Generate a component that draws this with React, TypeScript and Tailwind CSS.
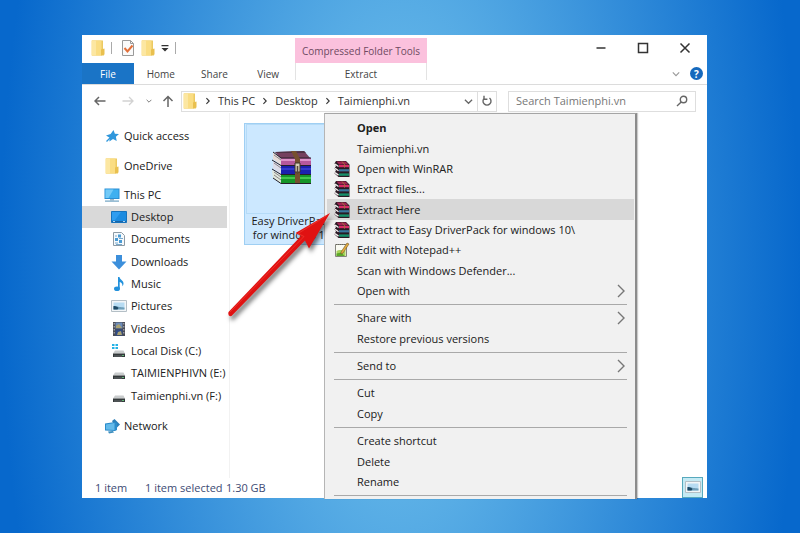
import type { ReactNode } from "react";

type IconProps = { className?: string };

const Folder = ({ className = "h-4 w-4" }: IconProps) => (
  <svg viewBox="0 0 16 16" className={className} aria-hidden="true">
    <path d="M2 .5h11v12l1 1v2H2z" fill="#ecca62" />
    <path d="M1.500 .5h10v15h-10z" fill="#fadd83" />
    <path d="M2 .5h4v15H2z" fill="#fce7a2" />
    <path d="M11 9.500l3.500-1v6l-3.500 1z" fill="#e9c04f" />
  </svg>
);

const CheckedPage = () => (
  <svg viewBox="0 0 16 16" className="h-4 w-4" aria-hidden="true">
    <path d="M2.500 .5h8l3 3v12h-11z" fill="#fafafa" stroke="#9a9a9a" />
    <path d="M10.500 .5v3h3" fill="none" stroke="#9a9a9a" />
    <path d="M4.500 8l3 3.500 5-6" fill="none" stroke="#e2703a" strokeWidth="2" />
  </svg>
);

const Pin = () => (
  <svg viewBox="0 0 16 16" className="h-4 w-4" aria-hidden="true">
    <path d="M9.500 2l1.400 3.700 4.100.4-3.100 2.600.8 4.300-3.700-1.900-3.600 2.500.3-3.800L2 7.500l4.600-1.600z" fill="#2f97dc" />
    <path d="M2.500 13.500l4-4" stroke="#2f97dc" strokeWidth="1.300" />
  </svg>
);

const Computer = () => (
  <svg viewBox="0 0 16 16" className="h-4 w-4" aria-hidden="true">
    <path d="M.5 1.500h15v10.500H.5z" fill="#2a8fd4" />
    <path d="M1.500 2.500h13v8.500h-13z" fill="#3fb0f0" />
    <path d="M1.500 2.500h8l-5 8.500h-3z" fill="#73caf7" />
    <path d="M6 12h4v1.500H6z" fill="#9fb8c8" />
    <path d="M1 13.500h14v1.200H1z" fill="#6fa3c2" />
  </svg>
);

const DesktopIcon = () => (
  <svg viewBox="0 0 16 16" className="h-4 w-4" aria-hidden="true">
    <path d="M.5 2.500h15v11H.5z" fill="#1b8be0" stroke="#1673bd" />
    <path d="M1 3h9l-6 8H1z" fill="#2f9df0" />
    <path d="M1 12h14v1H1z" fill="#1a64a5" />
    <path d="M2 12.500h2M12 12.500h2" stroke="#a9d5f5" />
  </svg>
);

const DocumentIcon = () => (
  <svg viewBox="0 0 16 16" className="h-4 w-4" aria-hidden="true">
    <path d="M2.500 1.500h8l3 3v10h-11z" fill="#f5f9fc" stroke="#8c9aa5" />
    <path d="M7 3.500h3v3H7zM4 7h3v3H4zM8 9h3v3H8z" fill="#4a9bd4" />
    <path d="M8 7.500h4M4 5h2M4 12h3M5 13.500h6" stroke="#79a9cc" />
  </svg>
);

const DownloadIcon = () => (
  <svg viewBox="0 0 16 16" className="h-4 w-4" aria-hidden="true">
    <path d="M5 1h6v6.500h4.500L8 15.500.5 7.500H5z" fill="#3c8fdb" />
  </svg>
);

const MusicIcon = () => (
  <svg viewBox="0 0 16 16" className="h-4 w-4" aria-hidden="true">
    <path d="M7 1h1.500c.3 2.500 4.500 3.500 4 7-.1 1-.6 1.700-1.200 2.300.5-2.400-.8-3.700-2.600-4.300V12.500H7z" fill="#2291dc" />
    <ellipse cx="6" cy="12.700" rx="3" ry="2.300" fill="#2291dc" />
  </svg>
);

const PictureIcon = () => (
  <svg viewBox="0 0 16 16" className="h-4 w-4" aria-hidden="true">
    <path d="M.5 2.500h15v11H.5z" fill="#f3f6f8" stroke="#b4bfc6" />
    <path d="M2.500 4.500h11v7h-11z" fill="#b7dcf3" />
    <path d="M2.500 8.500c3-1 5 .3 7 .5s3 .5 4 .5v2h-11z" fill="#6f9fba" />
    <path d="M2.500 8c2-.5 4 .8 5 2l-1 1.500h-4z" fill="#1e4964" />
  </svg>
);

const VideoIcon = () => (
  <svg viewBox="0 0 16 16" className="h-4 w-4" aria-hidden="true">
    <path d="M2 1h12v14H2z" fill="#4a4c55" />
    <path d="M4.500 1.500h7v6h-7z" fill="#6d8cb8" />
    <path d="M4.500 8.500h7v6h-7z" fill="#2f4a86" />
    <path d="M5 5l3-2 3 4H5zM7 11l3-1 1 4H6z" fill="#aaa271" />
    <path d="M3.200 2v12M12.800 2v12" stroke="#b9bcc2" strokeDasharray="1.500 1.500" />
  </svg>
);

const DriveIcon = ({ system = false }: { system?: boolean }) => (
  <svg viewBox="0 0 16 16" className="h-4 w-4" aria-hidden="true">
    {system && <path d="M1 1h2.500v2H1zM4.500 1H7v2H4.500zM1 4h2.500v2H1zM4.500 4H7v2H4.500z" fill="#25b2e6" />}
    <path d="M4 7.500h8.500l1.500 3H2z" fill="#c9cccd" />
    <path d="M2 10.500h12v3.500H2z" fill="#34393b" />
    <path d="M3 13h8" stroke="#666c6e" />
    <path d="M11 12.500h2" stroke="#61b474" />
  </svg>
);

const NetworkIcon = () => (
  <svg viewBox="0 0 16 16" className="h-4 w-4" aria-hidden="true">
    <path d="M8 3l2.500-2L16 6.500l-4 4z" fill="#2b7fb8" />
    <path d="M1 5.500L11 4l2 1v7l-2 1-10-.5z" fill="#2a8ccb" />
    <path d="M2 6.500L10.500 5v7L2 11.500z" fill="#63baea" />
    <path d="M4 13.500l5-.5 1 1.500-5 1z" fill="#3c8dbd" />
  </svg>
);

const BooksIcon = () => (
  <svg viewBox="0 0 42 34" className="h-[34px] w-[42px]" aria-hidden="true">
    <path d="M4 2l29-1 7 8H10z" fill="#74405f" />
    <path d="M4 2l29-1 2 2H6z" fill="#4e3245" />
    <path d="M2 2l8 7v6l-8-6z" fill="#e6dcd8" />
    <path d="M10 8h30v7H10z" fill="#b6589c" />
    <path d="M10 9h30v2H10z" fill="#dd92ca" />
    <path d="M2 11l8 5v8l-8-6z" fill="#dcdce8" />
    <path d="M10 16h30v8H10z" fill="#1b20ae" />
    <path d="M10 18h30v2H10z" fill="#3239cc" />
    <path d="M1 20l9 5v8l-8-5z" fill="#dfe8dc" />
    <path d="M10 25h30v8H10z" fill="#169528" />
    <path d="M10 27h30v2H10z" fill="#43c64d" />
    <path d="M2 2l8 6h30M1 10l9 5.500h30M1 19l9 5.500h30M2 28l8 5.500h30" fill="none" stroke="#26202a" />
    <path d="M3 5l7 5M3 13l7 5M3 22l7 5M3 25l7 5" stroke="#8d8589" />
    <path d="M20 1h5l4 8v24h-5V9z" fill="#76502f" />
    <path d="M24 13h5v9h-5z" fill="#d9d0b8" stroke="#3c342b" />
    <path d="M26.500 16v8" stroke="#57493a" strokeWidth="1.500" />
  </svg>
);

const SmallBooks = () => (
  <svg viewBox="0 0 16 16" className="h-4 w-4" aria-hidden="true">
    <path d="M2 0h10l3.500 3.500V16H4.500L.5 12.500 2 9 .5 7.500 2 5 .5 2.500z" fill="#2a1a24" />
    <path d="M2.500 .5h9l3 3H5z" fill="#a32352" />
    <path d="M5 4h10v2.200H5z" fill="#d92b66" />
    <path d="M5 8.200h10v2.200H5z" fill="#3a789f" />
    <path d="M5 12.400h10v2.400H5z" fill="#178f6a" />
    <path d="M1 3l3.500 2.500M1 7.300l3.500 2.500M1 11.600l3.500 2.500" stroke="#f2eeee" strokeWidth="1.400" />
    <path d="M8 .5l2.500 3v3" fill="none" stroke="#a1743f" />
  </svg>
);

const NotepadIcon = () => (
  <svg viewBox="0 0 16 16" className="h-4 w-4" aria-hidden="true">
    <path d="M1.500 2.500h11v12h-11z" fill="#fafbf2" stroke="#85857c" />
    <path d="M2.500 9c3-2 6 0 9-1v6h-9z" fill="#a7d35a" />
    <path d="M2.500 11.500l5-1 3 3.500h-8z" fill="#5ca82a" />
    <path d="M2 2.500h10" stroke="#68685f" strokeDasharray="1 1" />
    <path d="M7 10L13 1l2 1-6 9-2 1z" fill="#e5ad3d" stroke="#6f5428" strokeWidth=".6" />
  </svg>
);

const Chevron = ({ d, className }: { d: string; className: string }) => (
  <svg viewBox="0 0 10 10" className={className} fill="none" stroke="currentColor" strokeWidth="1.400" aria-hidden="true">
    <path d={d} />
  </svg>
);
const RIGHT = "M3 1.500L6.500 5 3 8.500";
const DOWN = "M1 3l4 4 4-4";

type NavItem = { label: string; icon: ReactNode; active?: boolean };

const PLACES: NavItem[] = [
  { label: "Desktop", icon: <DesktopIcon />, active: true },
  { label: "Documents", icon: <DocumentIcon /> },
  { label: "Downloads", icon: <DownloadIcon /> },
  { label: "Music", icon: <MusicIcon /> },
  { label: "Pictures", icon: <PictureIcon /> },
  { label: "Videos", icon: <VideoIcon /> },
  { label: "Local Disk (C:)", icon: <DriveIcon system /> },
  { label: "TAIMIENPHIVN (E:)", icon: <DriveIcon /> },
  { label: "Taimienphi.vn (F:)", icon: <DriveIcon /> },
];

const RootPlace = ({ label, icon }: NavItem) => (
  <button className="flex h-[22px] w-full items-center gap-1 pl-[22px] text-left">
    {icon}
    {label}
  </button>
);

type MenuEntry = { label: string; icon?: ReactNode; bold?: boolean; hover?: boolean; submenu?: boolean } | "line";

const MENU: MenuEntry[] = [
  { label: "Open", bold: true },
  { label: "Taimienphi.vn" },
  { label: "Open with WinRAR", icon: <SmallBooks /> },
  { label: "Extract files...", icon: <SmallBooks /> },
  { label: "Extract Here", icon: <SmallBooks />, hover: true },
  { label: "Extract to Easy DriverPack for windows 10\\", icon: <SmallBooks /> },
  { label: "Edit with Notepad++", icon: <NotepadIcon /> },
  { label: "Scan with Windows Defender..." },
  { label: "Open with", submenu: true },
  "line",
  { label: "Share with", submenu: true },
  { label: "Restore previous versions" },
  "line",
  { label: "Send to", submenu: true },
  "line",
  { label: "Cut" },
  { label: "Copy" },
  "line",
  { label: "Create shortcut" },
  { label: "Delete" },
  { label: "Rename" },
  "line",
];

const ContextMenu = () => (
  <div className="absolute top-0 left-[94px] flex h-[386px] w-[313px] flex-col border-t border-r-2 border-l border-t-[#a5a5a5] border-r-[#8c8c8c] border-l-[#b5b5b5] bg-[#f1f1f1] pt-1 shadow-[1px_0_1px_rgba(0,0,0,0.2)]">
    {MENU.map((entry, i) =>
      entry === "line" ? (
        <div key={i} className="flex h-[7px] shrink-0 items-center pr-2 pl-[9px]">
          <hr className="w-full border-[#a9a9a9]" />
        </div>
      ) : (
        <button
          key={i}
          className={`mr-px ml-[2px] flex flex-1 items-center gap-[7px] pr-[9px] pl-[7px] text-left ${entry.hover ? "bg-[#d8d8d8]" : ""} ${entry.bold ? "font-bold" : ""}`}
        >
          <span className="h-4 w-4 shrink-0">{entry.icon}</span>
          <span className="flex-1 whitespace-nowrap">{entry.label}</span>
          {entry.submenu && (
            <svg viewBox="0 0 8 14" className="h-[14px] w-2 text-[#777]" fill="none" stroke="currentColor" strokeWidth="1.400" aria-hidden="true">
              <path d="M1 1l6 6-6 6" />
            </svg>
          )}
        </button>
      ),
    )}
  </div>
);

const RedArrow = () => (
  <svg viewBox="0 0 120 120" className="pointer-events-none absolute top-[92px] -left-[7px] h-[120px] w-[120px] drop-shadow-[2px_4px_2px_rgba(0,0,0,0.5)]" aria-hidden="true">
    <path d="M107 8L86 43.500 82 35.500 8.500 111Q4.500 112 5.500 107L78 31 72.500 28z" fill="#e01212" />
    <path d="M104 10.500L75 28.500l6 3L7 107" fill="none" stroke="#ee3a30" strokeWidth=".8" />
  </svg>
);

export default function App() {
  return (
    <main className="min-h-screen bg-[radial-gradient(ellipse_400px_900px_at_50%_50%,#78c8ef,#0768cc)] pt-[35px] pr-[93px] pb-[35px] pl-[82px] font-['Open_Sans','Noto_Sans',sans-serif] text-[11px] leading-[14px] text-[#202020]">
      <section className="bg-white">
        <header>
          <div className="flex h-7 items-end">
            <div className="flex h-[30px] w-[213px] items-center pl-2 text-[#444]">
              <Folder />
              <span className="ml-[5px] h-3 w-px bg-[#aaa]" />
              <button className="ml-2" aria-label="Properties"><CheckedPage /></button>
              <button className="ml-1" aria-label="New folder"><Folder /></button>
              <button className="ml-1" aria-label="Customize toolbar">
                <svg viewBox="0 0 10 10" className="h-[10px] w-[10px]" aria-hidden="true">
                  <path d="M1.500 2h7v1.300h-7zM1.500 5h7L5 8.500z" fill="#333" />
                </svg>
              </button>
              <span className="ml-[5px] h-3 w-px bg-[#aaa]" />
            </div>
            <div className="flex h-[25px] w-[132px] items-center justify-center bg-[#fbc1dd] text-[10px] font-medium whitespace-nowrap text-[#6e4a62]">Compressed Folder Tools</div>
            <div className="mr-3 ml-auto flex h-[31px] items-center gap-[22px] text-[#333]">
              {[
                ["Minimize", "M5.500 10h9"],
                ["Maximize", "M5.500 5.500h9v9h-9z"],
                ["Close", "M5.500 5.500l9 9M14.500 5.500l-9 9"],
              ].map(([name, d]) => (
                <button key={name} aria-label={name}>
                  <svg viewBox="0 0 20 20" className="h-5 w-5" fill="none" stroke="currentColor" strokeWidth="1.500" aria-hidden="true">
                    <path d={d} />
                  </svg>
                </button>
              ))}
            </div>
          </div>
          <div className="flex h-[22px] border-b border-[#dcdcdc] text-[10px] font-medium text-[#444]">
            <nav className="flex w-[213px]">
              <button className="w-[52px] bg-[#1a74c6] text-white">File</button>
              <button className="flex-1">Home</button>
              <button className="flex-1">Share</button>
              <button className="flex-1">View</button>
            </nav>
            <button className="mb-1 w-[132px] border-x border-[#e3e3e3] pt-1">Extract</button>
            <div className="mr-1 ml-auto flex items-center gap-[10px]">
              <Chevron d={DOWN} className="h-2 w-2 text-[#999]" />
              <button aria-label="Help" className="flex h-[13px] w-[13px] items-center justify-center rounded-full bg-[#1569bd] text-[10px] font-bold text-white">?</button>
            </div>
          </div>
        </header>

        <div className="flex h-7 items-center pt-1 pr-[11px] text-[#666]">
          <div className="flex w-[99px] items-center pl-3">
            <svg viewBox="0 0 12 12" className="h-3 w-3" fill="none" stroke="currentColor" strokeWidth="1.500" aria-label="Back"><path d="M11.500 6H1M5 2L1 6l4 4" /></svg>
            <svg viewBox="0 0 12 12" className="ml-4 h-3 w-3 text-[#d2d2d2]" fill="none" stroke="currentColor" strokeWidth="1.300" aria-label="Forward"><path d="M.5 6H11M7 2l4 4-4 4" /></svg>
            <Chevron d={DOWN} className="ml-[12px] h-[6px] w-[6px]" />
            <svg viewBox="0 0 12 12" className="ml-[10px] h-3 w-3" fill="none" stroke="currentColor" strokeWidth="1.500" aria-label="Up"><path d="M6 12V1.500M1.500 6L6 1.500 10.500 6" /></svg>
          </div>
          <div className="flex h-[21px] flex-1 items-center border border-[#dedede] text-[#333]">
            <Folder className="h-4 w-4" />
            {["This PC", "Desktop", "Taimienphi.vn"].map((crumb) => (
              <span key={crumb} className="flex items-center whitespace-nowrap">
                <Chevron d={RIGHT} className="mr-[6px] ml-[6px] h-2 w-2" />
                <button>{crumb}</button>
              </span>
            ))}
            <button aria-label="Previous locations" className="mr-1 ml-auto"><Chevron d={DOWN} className="h-[9px] w-[9px] text-[#666]" /></button>
            <button aria-label="Refresh" className="flex h-full w-[19px] items-center justify-center border-l border-[#dedede]">
              <svg viewBox="0 0 12 12" className="h-3 w-3" fill="none" stroke="#666" strokeWidth="1.400" aria-hidden="true">
                <path d="M8.500 3a4 4 0 1 1-5 0M3 .8v3.400h3.400" />
              </svg>
            </button>
          </div>
          <div className="ml-[11px] flex h-[21px] w-[188px] items-center border border-[#dedede] pr-[7px] pl-[7px]">
            <input aria-label="Search Taimienphi.vn" placeholder="Search Taimienphi.vn" className="min-w-0 flex-1 outline-none placeholder:text-[#777]" />
            <svg viewBox="0 0 12 12" className="h-3 w-3" fill="none" stroke="#666" strokeWidth="1.400" aria-hidden="true">
              <circle cx="7.500" cy="4.500" r="3.200" />
              <path d="M5.200 7L1 11" />
            </svg>
          </div>
        </div>

        <div className="flex h-[365px]">
          <aside className="w-[148px] border-r border-[#f2f2f2] pt-3">
            <RootPlace label="Quick access" icon={<Pin />} />
            <div className="h-2" />
            <RootPlace label="OneDrive" icon={<Folder />} />
            <div className="flex h-[230px] flex-col pt-[7px] whitespace-nowrap">
              <RootPlace label="This PC" icon={<Computer />} />
              {PLACES.map((place) => (
                <button key={place.label} className={`mr-[2px] flex flex-1 items-center gap-1 pl-[29px] text-left ${place.active ? "bg-[#d9d9d9]" : ""}`}>
                  {place.icon}
                  {place.label}
                </button>
              ))}
            </div>
            <div className="h-2" />
            <RootPlace label="Network" icon={<NetworkIcon />} />
          </aside>

          <div className="relative flex-1">
            <button className="mt-[10px] ml-[14px] block w-24 border border-[#9fcff3] bg-[#cce8ff] text-center">
              <span className="mx-px flex h-[90px] items-center justify-center border border-[#b5dbf7] pb-1"><BooksIcon /></span>
              <span className="block pb-[2px]">Easy DriverPack<br />for windows 10</span>
            </button>
            <ContextMenu />
            <RedArrow />
          </div>
        </div>

        <footer className="flex h-5 items-center pl-[13px] text-[#3d4a73]">
          <span className="w-[50px]">1 item</span>
          <span className="w-[81px] whitespace-nowrap">1 item selected</span>
          <span>1.30 GB</span>
          <button aria-label="Large thumbnails" className="mr-1 mb-[2px] ml-auto flex h-[21px] w-[21px] items-center justify-center border border-[#57a9bd] bg-[#c4eaf4]"><PictureIcon /></button>
        </footer>
      </section>
    </main>
  );
}
